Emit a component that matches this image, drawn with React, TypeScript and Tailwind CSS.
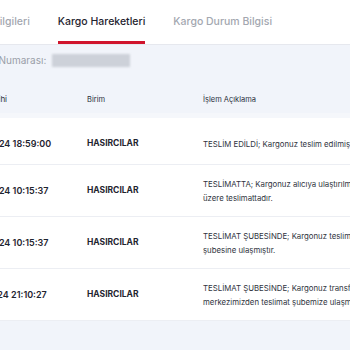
import React from "react";

const rows = [
  { date: "18.03.2024 18:59:00", unit: "HASIRCILAR", desc: ["TESLİM EDİLDİ; Kargonuz teslim edilmiştir."] },
  { date: "18.03.2024 10:15:37", unit: "HASIRCILAR", desc: ["TESLİMATTA; Kargonuz alıcıya ulaştırılmak", "üzere teslimattadır."] },
  { date: "18.03.2024 10:15:37", unit: "HASIRCILAR", desc: ["TESLİMAT ŞUBESİNDE; Kargonuz teslimat", "şubesine ulaşmıştır."] },
  { date: "17.03.2024 21:10:27", unit: "HASIRCILAR", desc: ["TESLİMAT ŞUBESİNDE; Kargonuz transfer", "merkezimizden teslimat şubemize ulaşmıştır."] },
];

export default function App() {
  return (
    <div className="w-[350px] h-[350px] overflow-hidden bg-[#f1f4fa]" style={{ fontFamily: "Inter, 'Noto Sans', sans-serif" }}>
      <div className="ml-[-42px] w-[470px]">
        <div className="h-[45px] bg-white border-b border-[#e6e8ee] flex items-end gap-[28px]">
          <div className="flex flex-col ml-[-8px]">
            <span className="text-[10.5px] font-medium text-[#a3a7b0] leading-none whitespace-nowrap">Gönderi Bilgileri</span>
            <div className="h-[3px] mt-[14px]" />
          </div>
          <div className="flex flex-col">
            <span className="text-[10.5px] font-medium text-[#1f2430] leading-none whitespace-nowrap">Kargo Hareketleri</span>
            <div className="h-[3px] mt-[14px] bg-[#d0142c]" />
          </div>
          <div className="flex flex-col">
            <span className="text-[10.5px] font-medium text-[#a3a7b0] leading-none whitespace-nowrap">Kargo Durum Bilgisi</span>
            <div className="h-[3px] mt-[14px]" />
          </div>
        </div>
        <div className="h-[30px] flex items-center">
          <span className="text-[10px] text-[#9a9ea8] whitespace-nowrap">Gönderi Numarası:</span>
          <div className="ml-[6px] w-[78px] h-[13px] bg-[#cdd1d9]" style={{ filter: "blur(1px)" }} />
        </div>
        <div className="h-[38px] grid grid-cols-[129px_116px_1fr] items-end pb-[8px]">
          <span className="text-[8px] text-[#2a2f3a] whitespace-nowrap pl-[6px]">İşlem Tarihi</span>
          <span className="text-[7.5px] text-[#2a2f3a]">Birim</span>
          <span className="text-[7.5px] text-[#2a2f3a]">İşlem Açıklama</span>
        </div>
        <div className="h-[5px] bg-[#f5f7fb]" />
        <div className="bg-white">
          {rows.map((r, i) => (
            <div key={i} className={`grid grid-cols-[129px_116px_1fr] items-center ${i === 0 ? "h-[47px] pt-[5px]" : "h-[52px]"} border-b border-[#eceef3]`}>
              <span className="text-[9px] font-semibold text-[#1f2430] whitespace-nowrap pl-[3px]">{r.date}</span>
              <span className="text-[8.5px] font-bold text-[#1f2430]">{r.unit}</span>
              <div className="flex flex-col text-[7.8px] leading-[14px] text-[#2f3440] whitespace-nowrap">
                {r.desc.map((d, j) => (
                  <span key={j}>{d}</span>
                ))}
              </div>
            </div>
          ))}
        </div>
      </div>
    </div>
  );
}
